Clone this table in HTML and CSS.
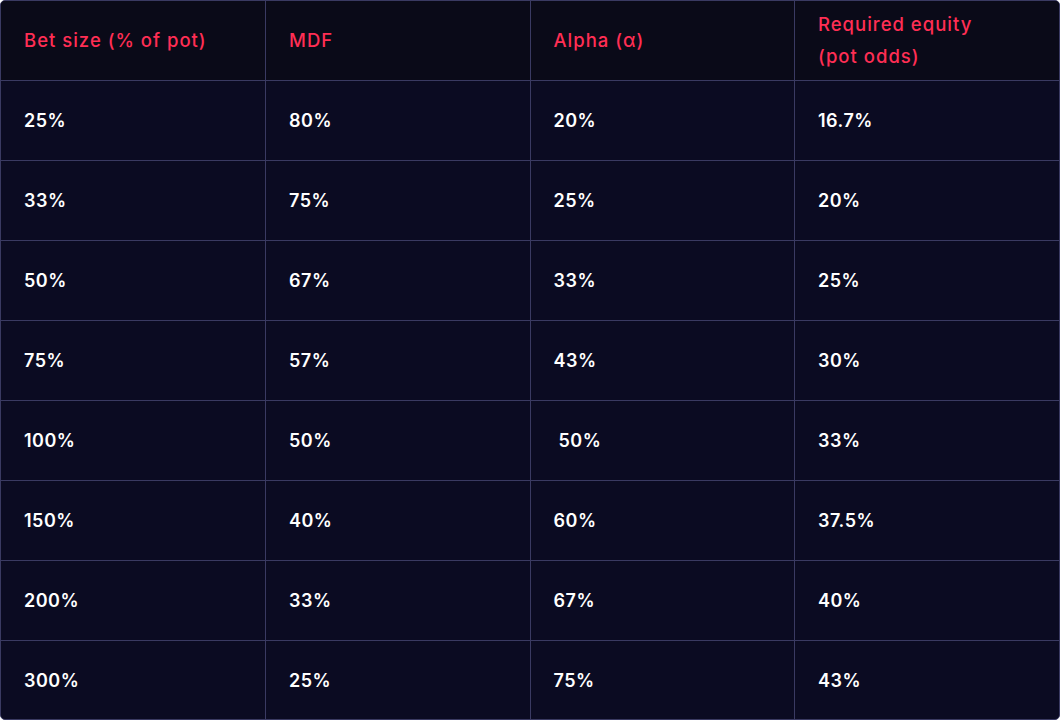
FILE: index.html
```html
<!DOCTYPE html>
<html>
<head>
<meta charset="utf-8">
<link rel="stylesheet" href="styles.css">
</head>
<body>
<div class="wrap">
<table class="tbl">
<thead>
<tr><th>Bet size (% of pot)</th><th>MDF</th><th>Alpha (α)</th><th>Required equity<br>(pot odds)</th></tr>
</thead>
<tbody>
<tr><td>25%</td><td>80%</td><td>20%</td><td>16.7%</td></tr>
<tr><td>33%</td><td>75%</td><td>25%</td><td>20%</td></tr>
<tr><td>50%</td><td>67%</td><td>33%</td><td>25%</td></tr>
<tr><td>75%</td><td>57%</td><td>43%</td><td>30%</td></tr>
<tr><td>100%</td><td>50%</td><td class="pre"> 50%</td><td>33%</td></tr>
<tr><td>150%</td><td>40%</td><td>60%</td><td>37.5%</td></tr>
<tr><td>200%</td><td>33%</td><td>67%</td><td>40%</td></tr>
<tr><td>300%</td><td>25%</td><td>75%</td><td>43%</td></tr>
</tbody>
</table>
</div>
</body>
</html>
```
FILE: styles.css
```css
html, body { margin: 0; padding: 0; background: #ffffff; }
.wrap {
  width: 1060px;
  height: 720px;
  box-sizing: border-box;
  border: 1px solid #3a3a62;
  border-radius: 5px;
  overflow: hidden;
  background: #0b0b22;
}
.tbl {
  width: 100%;
  border-collapse: collapse;
  table-layout: fixed;
  font-family: Inter, "Liberation Sans", sans-serif;
  font-size: 18px;
  font-weight: 600;
  letter-spacing: 0.5px;
  color: #ffffff;
}
.tbl tr { height: 80px; }
.tbl thead tr { height: 79px; }
.tbl th, .tbl td {
  padding: 0 20px 0 23px;
  text-align: left;
  vertical-align: middle;
  border: 1px solid #3a3a62;
}
.tbl tr:first-child th { border-top: none; }
.tbl th:first-child, .tbl td:first-child { border-left: none; }
.tbl th:last-child, .tbl td:last-child { border-right: none; }
.tbl tbody tr:last-child td { border-bottom: none; }
.tbl th {
  background: #0a0a18;
  color: #ff2e54;
  font-size: 18.5px;
  font-weight: 500;
  letter-spacing: 1px;
  line-height: 32px;
}
.pre { white-space: pre; }
```
